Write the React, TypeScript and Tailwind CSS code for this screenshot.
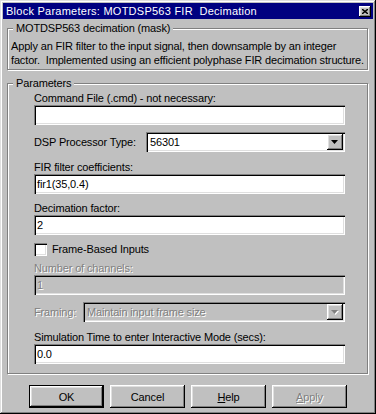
import React from 'react';

const sunken =
  'shadow-[inset_1px_1px_#808080,inset_2px_2px_#000,inset_-1px_-1px_#fff,inset_-2px_-2px_#dfdfdf]';
const raised =
  'shadow-[inset_-1px_-1px_#000,inset_1px_1px_#fff,inset_-2px_-2px_#808080,inset_2px_2px_#dfdfdf]';
const etched = 'border border-[#808080] shadow-[inset_1px_1px_#fff,1px_1px_#fff]';
const dimText = 'text-[#808080] [text-shadow:1px_1px_0_#fff]';

function Field({ value, disabled }: { value: string; disabled?: boolean }) {
  return (
    <div
      className={`h-[20px] w-[311px] ${sunken} ${disabled ? 'bg-[#c0c0c0]' : 'bg-white'} flex items-center pl-[3px]`}
    >
      <span className={disabled ? dimText : 'text-black'}>{value}</span>
    </div>
  );
}

function Arrow({ disabled }: { disabled?: boolean }) {
  return (
    <svg width="8" height="5" viewBox="0 0 8 5">
      {disabled && <polygon points="1,1 8,1 4.5,5" fill="#fff" />}
      <polygon points="0,0 7,0 3.5,4" fill={disabled ? '#808080' : '#000'} />
    </svg>
  );
}

function Select({ value, width, disabled }: { value: string; width: string; disabled?: boolean }) {
  return (
    <div
      className={`h-[20px] ${width} ${sunken} ${disabled ? 'bg-[#c0c0c0]' : 'bg-white'} flex items-center pl-[4px] pr-[2px]`}
    >
      <span className={`flex-1 ${disabled ? dimText : 'text-black'}`}>{value}</span>
      <div className={`w-[16px] h-[16px] bg-[#c0c0c0] ${raised} flex items-center justify-center`}>
        <Arrow disabled={disabled} />
      </div>
    </div>
  );
}

function Btn({ children, isDefault, disabled }: { children: React.ReactNode; isDefault?: boolean; disabled?: boolean }) {
  return (
    <div
      className={`w-[75px] h-[23px] bg-[#c0c0c0] flex items-center justify-center ${isDefault ? 'border border-black' : ''} ${raised} ${disabled ? dimText : 'text-black'}`}
    >
      {children}
    </div>
  );
}

export default function App() {
  return (
    <div
      className="w-[376px] h-[414px] overflow-hidden bg-[#c0c0c0] p-[3px] text-[11px] leading-[14px] text-black whitespace-nowrap shadow-[inset_-1px_-1px_#000,inset_1px_1px_#dfdfdf,inset_-2px_-2px_#808080,inset_2px_2px_#fff]"
      style={{ fontFamily: '"Liberation Sans", Arial, sans-serif' }}
    >
      <div className="h-[16px] bg-[#000080] flex items-center justify-between pl-[3px] pr-[2px] text-white">
        <span className="tracking-[0.25px]">Block Parameters: MOTDSP563 FIR&nbsp; Decimation</span>
        <div className={`w-[12px] h-[11px] bg-[#c0c0c0] ${raised} flex items-center justify-center`}>
          <svg width="6" height="5" viewBox="0 0 6 5">
            <path d="M0 0 L6 5 M6 0 L0 5" stroke="#000" strokeWidth="1.4" />
          </svg>
        </div>
      </div>

      <div className="tracking-[-0.15px]">
        <div className={`relative mt-[9px] ml-[4px] w-[361px] ${etched} pt-[10px] pb-[2px] pl-[3px]`}>
          <span className="absolute left-[5px] top-[-8px] px-[3px] bg-[#c0c0c0]">MOTDSP563 decimation (mask)</span>
          <p>Apply an FIR filter to the input signal, then downsample by an integer</p>
          <p>factor.&nbsp; Implemented using an efficient polyphase FIR decimation structure.</p>
        </div>

        <div className={`relative mt-[13px] ml-[4px] w-[361px] ${etched} pt-[7px] pb-[9px] pl-[26px] flex flex-col`}>
          <span className="absolute left-[5px] top-[-8px] px-[3px] bg-[#c0c0c0]">Parameters</span>
          <span>Command File (.cmd) - not necessary:</span>
          <Field value="" />
          <div className="mt-[7px] flex items-center">
            <span className="w-[112px]">DSP Processor Type:</span>
            <Select value="56301" width="w-[199px]" />
          </div>
          <span className="mt-[8px]">FIR filter coefficients:</span>
          <Field value="fir1(35,0.4)" />
          <span className="mt-[7px]">Decimation factor:</span>
          <Field value="2" />
          <div className="mt-[7px] h-[14px] flex items-center gap-[5px]">
            <div className={`w-[13px] h-[13px] bg-white ${sunken}`} />
            <span>Frame-Based Inputs</span>
          </div>
          <span className={`mt-[5px] ${dimText}`}>Number of channels:</span>
          <Field value="1" disabled />
          <div className="mt-[7px] flex items-center">
            <span className={`w-[49px] ${dimText}`}>Framing:</span>
            <Select value="Maintain input frame size" width="w-[262px]" disabled />
          </div>
          <span className="mt-[8px]">Simulation Time to enter Interactive Mode (secs):</span>
          <Field value="0.0" />
        </div>

        <div className="mt-[11px] pl-[26px] flex gap-[6px]">
          <Btn isDefault>OK</Btn>
          <Btn>Cancel</Btn>
          <Btn>
            <span>
              <u>H</u>elp
            </span>
          </Btn>
          <Btn disabled>
            <span>
              <u>A</u>pply
            </span>
          </Btn>
        </div>
      </div>
    </div>
  );
}
